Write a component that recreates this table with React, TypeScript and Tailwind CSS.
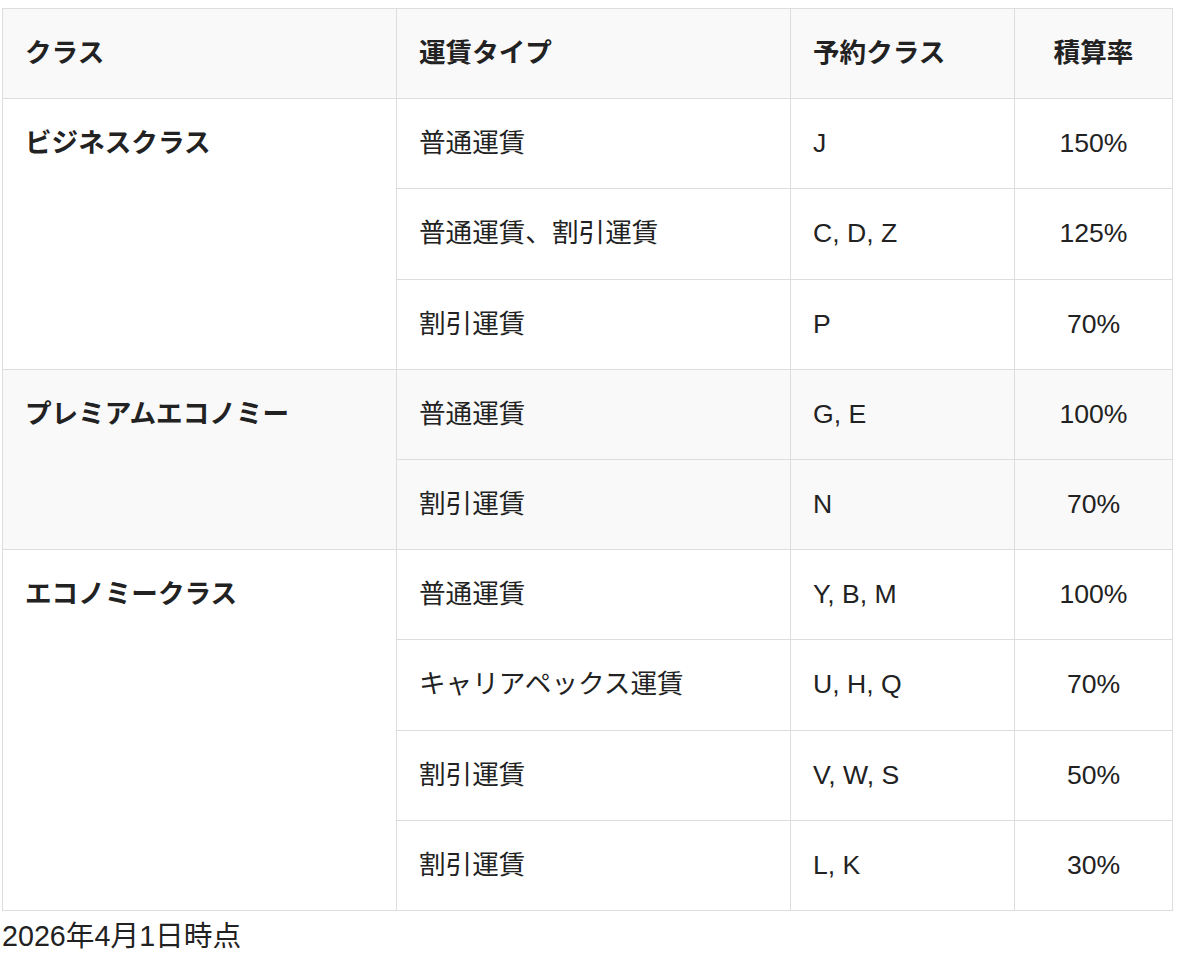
import React from "react";

type Row = { fare: string; codes: string; rate: string };
type Group = { name: string; bg: string; rows: Row[] };

const groups: Group[] = [
  {
    name: "ビジネスクラス",
    bg: "bg-white",
    rows: [
      { fare: "普通運賃", codes: "J", rate: "150%" },
      { fare: "普通運賃、割引運賃", codes: "C, D, Z", rate: "125%" },
      { fare: "割引運賃", codes: "P", rate: "70%" },
    ],
  },
  {
    name: "プレミアムエコノミー",
    bg: "bg-[#f9f9f9]",
    rows: [
      { fare: "普通運賃", codes: "G, E", rate: "100%" },
      { fare: "割引運賃", codes: "N", rate: "70%" },
    ],
  },
  {
    name: "エコノミークラス",
    bg: "bg-white",
    rows: [
      { fare: "普通運賃", codes: "Y, B, M", rate: "100%" },
      { fare: "キャリアペックス運賃", codes: "U, H, Q", rate: "70%" },
      { fare: "割引運賃", codes: "V, W, S", rate: "50%" },
      { fare: "割引運賃", codes: "L, K", rate: "30%" },
    ],
  },
];

const cell = "border border-[#dddddd] px-[22px] py-[25.1px] leading-[39px] align-top";

export default function App() {
  return (
    <div
      className="bg-white text-[#222222] text-[26.6px] pt-[8px] pl-[2px] pr-[10px] min-h-[966px]"
      style={{ fontFamily: '"Liberation Sans", "Noto Sans CJK JP", sans-serif' }}
    >
      <table className="border-collapse w-[1170px] table-fixed">
        <colgroup>
          <col className="w-[394px]" />
          <col className="w-[394px]" />
          <col className="w-[224px]" />
          <col className="w-[158px]" />
        </colgroup>
        <thead>
          <tr className="bg-[#f9f9f9]">
            <th className={`${cell} text-left font-bold`}>クラス</th>
            <th className={`${cell} text-left font-bold`}>運賃タイプ</th>
            <th className={`${cell} text-left font-bold`}>予約クラス</th>
            <th className={`${cell} text-center font-bold`}>積算率</th>
          </tr>
        </thead>
        <tbody>
          {groups.map((g) =>
            g.rows.map((r, i) => (
              <tr key={g.name + i} className={g.bg}>
                {i === 0 && (
                  <td rowSpan={g.rows.length} className={`${cell} text-left font-bold`}>
                    {g.name}
                  </td>
                )}
                <td className={`${cell} text-left`}>{r.fare}</td>
                <td className={`${cell} text-left`}>{r.codes}</td>
                <td className={`${cell} text-center`}>{r.rate}</td>
              </tr>
            ))
          )}
        </tbody>
      </table>
      <p className="text-[28.7px] leading-[39px] mt-[6px]">2026年4月1日時点</p>
    </div>
  );
}
